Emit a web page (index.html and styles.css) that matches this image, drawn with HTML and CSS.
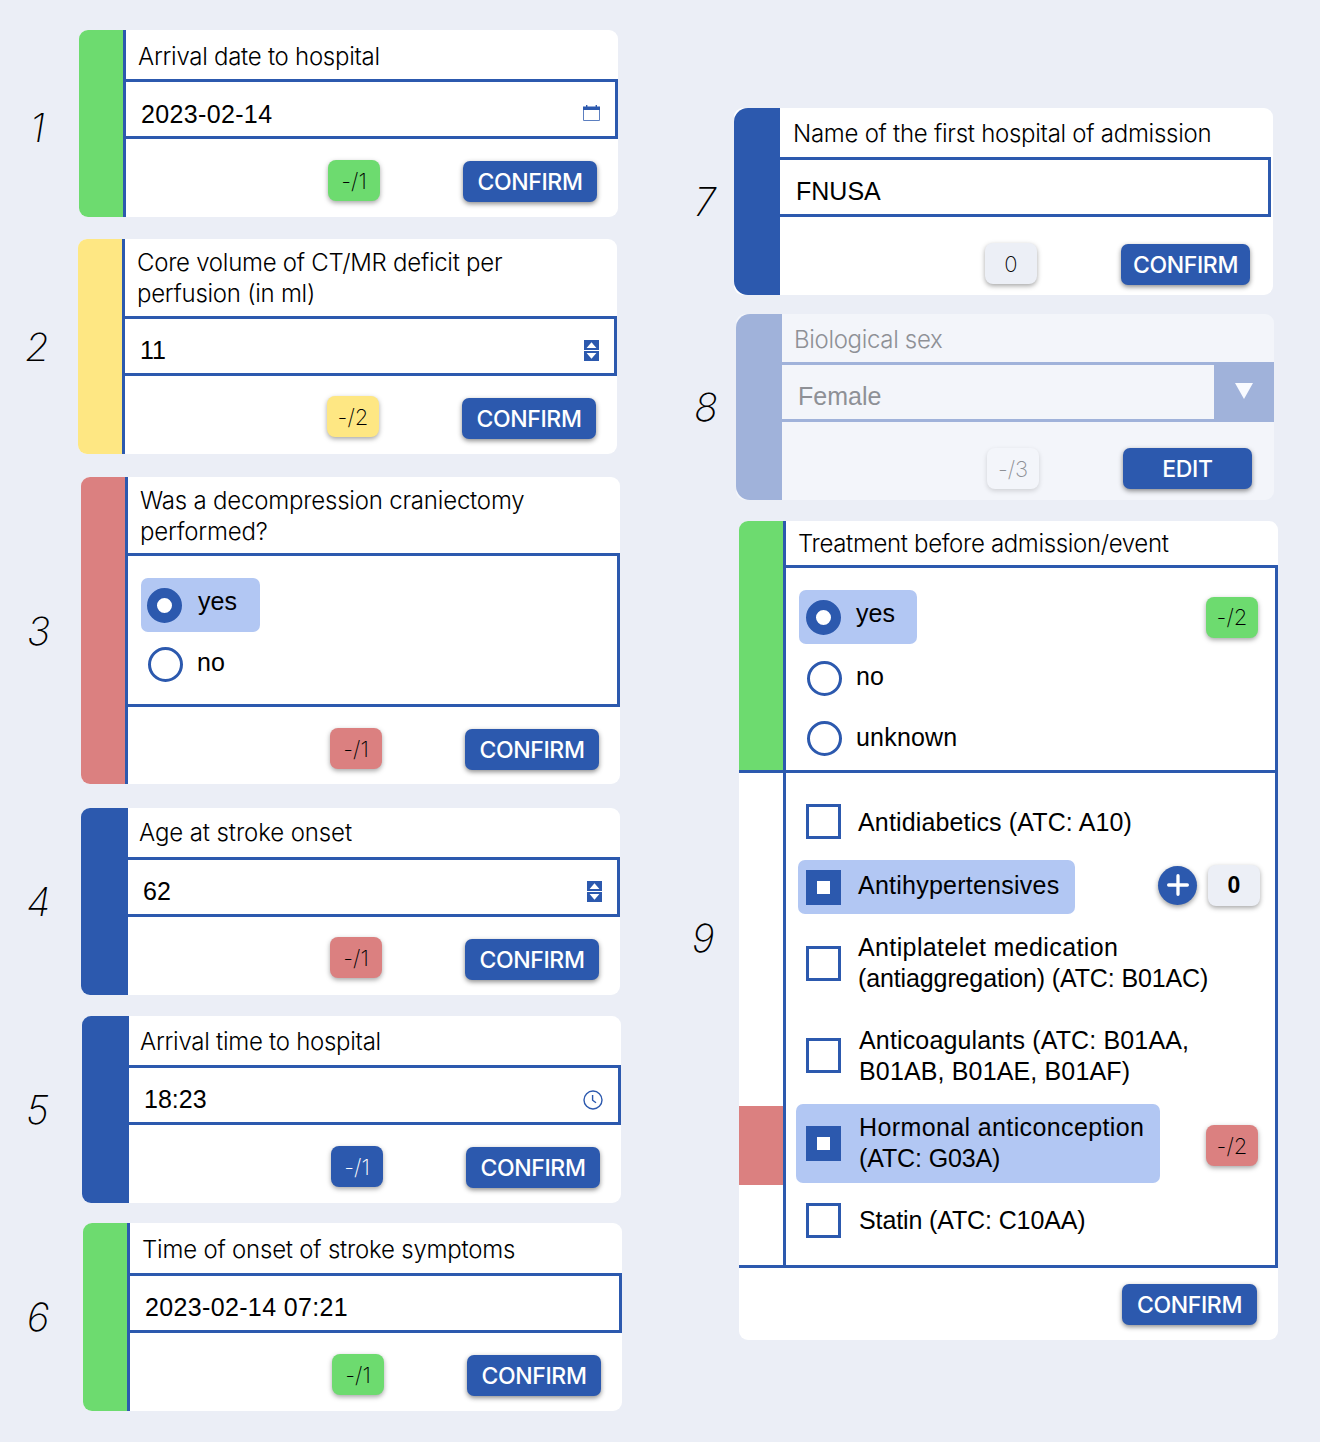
FILE: index.html
```html
<!DOCTYPE html>
<html lang="en">
<head>
<meta charset="utf-8">
<title>Form fields</title>
<link rel="stylesheet" href="styles.css">
</head>
<body>
<main class="board">
  <div class="column column-left">
    <section class="entry entry-1">
      <div class="number">1</div>
      <article class="card">
        <div class="rail green"></div>
        <div class="body">
          <h2 class="title">Arrival date to hospital</h2>
          <div class="input"><span>2023-02-14</span>
            <svg class="icon-calendar" viewBox="0 0 17 16"><path d="M.5 2.5h16v13H.5z" fill="#fff" stroke="#5c7fc0"/><path d="M0 1.5h17V5H0zM3 0h1.4v2H3zM12.6 0H14v2h-1.4z" fill="#2c59ae"/></svg>
          </div>
          <div class="footer"><span class="badge green">-/1</span><button class="button">CONFIRM</button></div>
        </div>
      </article>
    </section>

    <section class="entry entry-2">
      <div class="number">2</div>
      <article class="card">
        <div class="rail yellow"></div>
        <div class="body">
          <h2 class="title">Core volume of CT/MR deficit per<br>perfusion (in ml)</h2>
          <div class="input"><span>11</span>
            <svg class="icon-spinner" viewBox="0 0 15 21"><path d="M0 0h15v10H0zM0 11h15v10H0z" fill="#2c59ae"/><path d="M7.5 2.2 12.4 8H2.6zM7.5 18.8 12.4 13H2.6z" fill="#fff"/></svg>
          </div>
          <div class="footer"><span class="badge yellow">-/2</span><button class="button">CONFIRM</button></div>
        </div>
      </article>
    </section>

    <section class="entry entry-3">
      <div class="number">3</div>
      <article class="card">
        <div class="rail red"></div>
        <div class="body">
          <h2 class="title">Was a decompression craniectomy<br>performed?</h2>
          <div class="choices">
            <label class="option selected"><i class="radio on"></i><span>yes</span></label>
            <label class="option"><i class="radio"></i><span>no</span></label>
          </div>
          <div class="footer"><span class="badge red">-/1</span><button class="button">CONFIRM</button></div>
        </div>
      </article>
    </section>

    <section class="entry entry-4">
      <div class="number">4</div>
      <article class="card">
        <div class="rail blue"></div>
        <div class="body">
          <h2 class="title">Age at stroke onset</h2>
          <div class="input"><span>62</span>
            <svg class="icon-spinner" viewBox="0 0 15 21"><path d="M0 0h15v10H0zM0 11h15v10H0z" fill="#2c59ae"/><path d="M7.5 2.2 12.4 8H2.6zM7.5 18.8 12.4 13H2.6z" fill="#fff"/></svg>
          </div>
          <div class="footer"><span class="badge red">-/1</span><button class="button">CONFIRM</button></div>
        </div>
      </article>
    </section>

    <section class="entry entry-5">
      <div class="number">5</div>
      <article class="card">
        <div class="rail blue"></div>
        <div class="body">
          <h2 class="title">Arrival time to hospital</h2>
          <div class="input"><span>18:23</span>
            <svg class="icon-clock" viewBox="0 0 20 20"><circle cx="10" cy="10" r="9" fill="none" stroke="#2c59ae" stroke-width="1.4"/><path d="M9.6 5v5.2l3.4 2.6" fill="none" stroke="#2c59ae" stroke-width="1.4"/></svg>
          </div>
          <div class="footer"><span class="badge blue">-/1</span><button class="button">CONFIRM</button></div>
        </div>
      </article>
    </section>

    <section class="entry entry-6">
      <div class="number">6</div>
      <article class="card">
        <div class="rail green"></div>
        <div class="body">
          <h2 class="title">Time of onset of stroke symptoms</h2>
          <div class="input"><span>2023-02-14 07:21</span></div>
          <div class="footer"><span class="badge green">-/1</span><button class="button">CONFIRM</button></div>
        </div>
      </article>
    </section>
  </div>

  <div class="column column-right">
    <section class="entry entry-7">
      <div class="number">7</div>
      <article class="card">
        <div class="rail blue"></div>
        <div class="body">
          <h2 class="title">Name of the first hospital of admission</h2>
          <div class="input"><span>FNUSA</span></div>
          <div class="footer"><span class="badge gray">0</span><button class="button">CONFIRM</button></div>
        </div>
      </article>
    </section>

    <section class="entry entry-8">
      <div class="number">8</div>
      <article class="card locked">
        <div class="rail"></div>
        <div class="body">
          <h2 class="title">Biological sex</h2>
          <div class="input"><span>Female</span>
            <div class="dropdown"><svg viewBox="0 0 18 16"><path d="M0 0h18L9 16z" fill="#f8faff"/></svg></div>
          </div>
          <div class="footer"><span class="badge gray">-/3</span><button class="button">EDIT</button></div>
        </div>
      </article>
    </section>

    <section class="entry entry-9">
      <div class="number">9</div>
      <article class="card tree">
        <div class="parent">
          <div class="rail green"></div>
          <div class="body">
            <h2 class="title">Treatment before admission/event</h2>
            <div class="choices">
              <div class="line"><label class="option selected"><i class="radio on"></i><span>yes</span></label><span class="badge green">-/2</span></div>
              <label class="option"><i class="radio"></i><span>no</span></label>
              <label class="option"><i class="radio"></i><span>unknown</span></label>
            </div>
          </div>
        </div>
        <div class="children">
          <div class="child child-1"><div class="rail"></div><div class="cell"><label class="option"><i class="box"></i><span>Antidiabetics (ATC: A10)</span></label></div></div>
          <div class="child child-2"><div class="rail"></div><div class="cell"><label class="option selected"><i class="box on"></i><span>Antihypertensives</span></label>
            <div class="tools"><button class="add"><svg viewBox="0 0 20 20"><path d="M10 1.5v17M1.5 10h17" stroke="#fff" stroke-width="3" stroke-linecap="round"/></svg></button><span class="badge gray strong">0</span></div></div></div>
          <div class="child child-3"><div class="rail"></div><div class="cell"><label class="option"><i class="box"></i><span><span class="roomy">Antiplatelet medication</span><br><span class="snug">(antiaggregation) (ATC: B01AC)</span></span></label></div></div>
          <div class="child child-4"><div class="rail"></div><div class="cell"><label class="option"><i class="box"></i><span>Anticoagulants (ATC: B01AA,<br>B01AB, B01AE, B01AF)</span></label></div></div>
          <div class="child child-5"><div class="rail red"></div><div class="cell"><label class="option selected"><i class="box on"></i><span><span class="roomy">Hormonal anticonception</span><br><span class="snug">(ATC: G03A)</span></span></label><span class="badge red">-/2</span></div></div>
          <div class="child child-6"><div class="rail"></div><div class="cell"><label class="option"><i class="box"></i><span class="snug">Statin (ATC: C10AA)</span></label></div></div>
        </div>
        <div class="footer"><button class="button">CONFIRM</button></div>
      </article>
    </section>
  </div>
</main>
</body>
</html>
```
FILE: styles.css
```css
* {
  box-sizing: border-box;
}

body {
  margin: 0;
  background: #ebeef6;
  color: #000;
  font-family: "Liberation Sans", Arial, sans-serif;
  font-size: 25px;
}

.board {
  display: grid;
  grid-template-columns: 660px 660px;
  height: 1442px;
}

.column {
  display: flex;
  flex-direction: column;
}

.column-left { padding-top: 30px; }
.column-right { padding-top: 108px; }

.entry {
  display: flex;
  align-items: center;
}

.number {
  flex: none;
  width: var(--x);
  padding-right: 4px;
  text-align: center;
  font: italic 200 39px/40px Inter, sans-serif;
}

.column-right .number { padding: 0 0 0 16px; }

.card {
  display: flex;
  align-self: stretch;
  width: 539px;
  border-radius: 9px;
  background: #fff;
}

.entry-1 { --x: 79px; height: 187px; margin-bottom: 22px; }
.entry-2 { --x: 78px; height: 215px; margin-bottom: 23px; }
.entry-3 { --x: 81px; height: 307px; margin-bottom: 24px; }
.entry-4 { --x: 81px; height: 187px; margin-bottom: 21px; }
.entry-5 { --x: 82px; height: 187px; margin-bottom: 20px; }
.entry-6 { --x: 83px; height: 188px; }
.entry-7 { --x: 74px; height: 187px; margin-bottom: 19px; }
.entry-8 { --x: 76px; height: 186px; margin-bottom: 21px; }
.entry-9 { --x: 79px; height: 819px; }

.entry-1 .number { padding-top: 9px; }
.entry-5 .number,
.entry-6 .number { padding-right: 7px; }
.column-right .entry-9 .number { padding: 15px 0 0 7px; }

.rail {
  flex: none;
  width: 47px;
  border-right: 3px solid #2c59ae;
  border-radius: 9px 0 0 9px;
}

.green { background: #6ddb6f; }
.yellow { background: #fee783; }
.red { background: #db8080; }
.blue { background: #2c59ae; color: #fff; }
.gray { background: #eceff6; }

.body {
  display: flex;
  flex: 1;
  flex-direction: column;
}

.title {
  height: 49px;
  margin: 0;
  padding: 10px 0 0 12px;
  font: 300 24px/31px Inter, sans-serif;
  letter-spacing: -.27px;
  white-space: nowrap;
}

.entry-2 .title { height: 77px; padding-top: 8px; }
.entry-3 .title { height: 76px; padding-top: 8px; letter-spacing: -.2px; }
.entry-1 .title { padding-top: 11px; }
.entry-4 .title { padding: 9px 0 0 11px; letter-spacing: -.1px; }
.entry-5 .title { padding-left: 11px; }
.entry-6 .title { height: 50px; padding-top: 11px; letter-spacing: -.21px; }

.input {
  display: flex;
  align-items: center;
  justify-content: space-between;
  height: 60px;
  padding: 9px 15px 0 15px;
  border: solid #2c59ae;
  border-width: 3px 3px 3px 0;
}

.entry-1 .input,
.entry-6 .input { letter-spacing: .35px; }
.entry-1 .input > span { padding-top: 2px; }

.icon-calendar { width: 17px; height: 16px; margin-top: -1px; }
.icon-spinner { width: 15px; height: 21px; }
.icon-clock { width: 20px; height: 20px; }

.footer {
  display: flex;
  align-items: flex-start;
  justify-content: space-between;
  padding: 21px 21px 0 202px;
}

.entry-2 .footer,
.entry-4 .footer { padding-top: 20px; }
.entry-2 .button,
.entry-4 .button { margin-top: 2px; }

.badge {
  display: flex;
  align-items: center;
  justify-content: center;
  width: 52px;
  height: 41px;
  border-radius: 8px;
  box-shadow: 0 2px 5px rgba(0, 0, 0, .35);
  font: 250 22px/40px Inter, sans-serif;
}

.strong { font: 700 23px/41px "Liberation Sans", Arial, sans-serif; }

.button {
  width: 134px;
  height: 41px;
  margin: 1px 0 0;
  padding: 2px 0 0;
  border: 0;
  border-radius: 7px;
  background: #2c59ae;
  box-shadow: 0 2px 5px rgba(0, 0, 0, .45);
  color: #fff;
  font: 500 23px/39px Inter, sans-serif;
  letter-spacing: -.35px;
}

.choices {
  display: flex;
  flex-direction: column;
  align-items: flex-start;
  height: 154px;
  padding: 22px 0 0 13px;
  border: solid #2c59ae;
  border-width: 3px 3px 3px 0;
}

.option {
  display: flex;
  align-items: center;
  gap: 16px;
  height: 54px;
  padding: 0 23px 0 6px;
  border-radius: 7px;
  line-height: 31px;
  white-space: nowrap;
}

.choices .option { gap: 14px; padding-left: 7px; }
.choices .option.selected { gap: 16px; padding-left: 6px; }
.choices .option > span { padding-bottom: 3px; }
.choices .selected > span { padding-bottom: 7px; }
.choices .option + .option { margin-top: 5px; }
.selected { background: #b2c7f3; }

.radio,
.box {
  flex: none;
  width: 35px;
  height: 35px;
  border: 3px solid #2c59ae;
  background: #fff;
}

.radio { border-radius: 50%; }
.radio.on { border-width: 10px; }
.box.on { border-width: 11px; }

/* locked card */
.locked { width: 538px; background: #f3f5fa; color: #8e9096; }
.locked .rail { border-color: #a0b2da; background: #a0b2da; }
.locked .input { padding-right: 0; border-color: #a0b2da; }
.locked .input > span { flex: 1; }

.dropdown {
  align-self: stretch;
  display: flex;
  justify-content: center;
  width: 57px;
  margin-top: -9px;
  padding-top: 18px;
  background: #a0b2da;
}

.dropdown svg { width: 18px; height: 16px; margin-left: 3px; }
.locked .badge { background: #f3f5fa; box-shadow: 0 2px 5px rgba(0, 0, 0, .15); }

.entry-7 .rail,
.entry-8 .rail { width: 46px; border-radius: 14px 0 0 14px; }
.entry-7 .title { padding-left: 13px; }
.entry-7 .footer { padding: 27px 23px 0 205px; }
.entry-8 .footer { padding: 26px 22px 0 205px; }
.entry-7 .button,
.entry-8 .button { width: 129px; margin-top: 0; }
.entry-7 .badge { margin-top: -1px; }
.entry-7 .input { margin-right: 2px; padding-left: 16px; }
.entry-8 .input { padding-left: 16px; }
.entry-8 .title { height: 48px; letter-spacing: -.33px; }

/* parent question with child options */
.tree { display: block; }
.parent { display: flex; height: 249px; }
.parent .rail { border-bottom-left-radius: 0; }
.parent .title { height: 44px; padding-top: 7px; letter-spacing: -.34px; }
.parent .choices { flex: 1; height: auto; padding-bottom: 0; border-bottom: 0; }
.parent .choices .option { padding-left: 8px; }
.parent .choices .option.selected { gap: 15px; padding: 0 22px 0 7px; }
.parent .choices .option + .option { margin-top: 6px; letter-spacing: .2px; }
.parent .choices .option + .option > span { padding-bottom: 1px; }
.parent .choices .line + .option { margin-top: 7px; }

.line {
  display: flex;
  align-items: center;
  justify-content: space-between;
  align-self: stretch;
  padding-right: 17px;
}

.children {
  border: solid #2c59ae;
  border-width: 3px 0;
}

.child { display: flex; }
.child .rail { border-radius: 0; }
.child-1 { height: 87px; }
.child-2 { height: 54px; }
.child-3 { height: 99px; }
.child-4 { height: 93px; }
.child-5 { height: 79px; }
.child-6 { height: 80px; }

.cell {
  display: flex;
  flex: 1;
  align-items: center;
  justify-content: space-between;
  padding: 0 17px 0 14px;
  border-right: 3px solid #2c59ae;
}

.child-1 .cell { padding-top: 10px; }
.child-4 .cell { padding-bottom: 8px; }
.child-6 .cell { padding-bottom: 10px; }
.cell .option { gap: 17px; letter-spacing: .15px; }
.child-1 .option > span { padding-top: 2px; }
.child-2 .option { margin-left: -2px; padding: 0 16px 0 8px; letter-spacing: .24px; }
.child-2 .option > span { padding-bottom: 3px; }
.child-2 .cell { padding-right: 15px; }
.child-3 .option > span { padding-bottom: 2px; }
.child-5 .option { gap: 18px; height: 79px; margin: -4px 0 0 -4px; padding: 0 16px 0 10px; }
.child-5 .option > span { padding-bottom: 2px; }
.child-4 .option > span,
.child-6 .option > span { margin-left: 1px; }
.cell .roomy { letter-spacing: .38px; }
.cell .snug { letter-spacing: -.12px; }

.tools {
  display: flex;
  align-items: center;
  gap: 11px;
  margin-top: -4px;
}

.add {
  display: flex;
  align-items: center;
  justify-content: center;
  width: 39px;
  height: 39px;
  padding: 0;
  border: 0;
  border-radius: 50%;
  background: #2c59ae;
  box-shadow: 0 2px 5px rgba(0, 0, 0, .4);
}

.add svg { width: 22px; height: 22px; }

.tree > .footer {
  justify-content: flex-end;
  padding: 15px 21px 0 0;
}

.tree > .footer .button { width: 135px; }
```
